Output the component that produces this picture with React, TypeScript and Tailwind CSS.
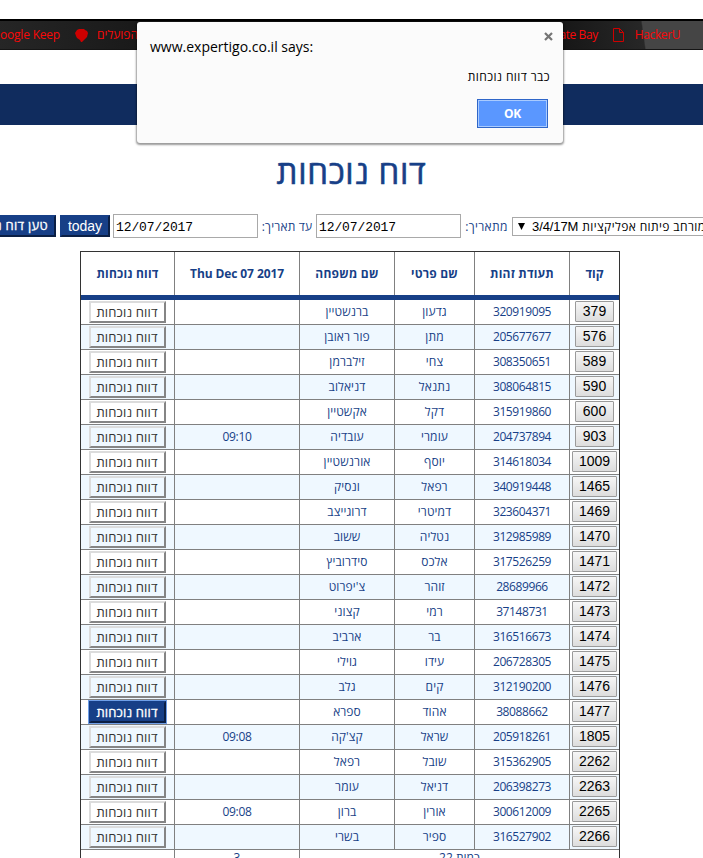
import React from "react";

type Row = [string, string, string, string, string];

const rows: Row[] = [
  ["379", "320919095", "גדעון", "ברנשטיין", ""],
  ["576", "205677677", "מתן", "פור ראובן", ""],
  ["589", "308350651", "צחי", "זילברמן", ""],
  ["590", "308064815", "נתנאל", "דניאלוב", ""],
  ["600", "315919860", "דקל", "אקשטיין", ""],
  ["903", "204737894", "עומרי", "עובדיה", "09:10"],
  ["1009", "314618034", "יוסף", "אורנשטיין", ""],
  ["1465", "340919448", "רפאל", "ונסיק", ""],
  ["1469", "323604371", "דמיטרי", "דרוגייצב", ""],
  ["1470", "312985989", "נטליה", "ששוב", ""],
  ["1471", "317526259", "אלכס", "סידרוביץ", ""],
  ["1472", "28689966", "זוהר", "צ'יפרוט", ""],
  ["1473", "37148731", "רמי", "קצוני", ""],
  ["1474", "316516673", "בר", "ארביב", ""],
  ["1475", "206728305", "עידו", "גוילי", ""],
  ["1476", "312190200", "קים", "גלב", ""],
  ["1477", "38088662", "אהוד", "ספרא", ""],
  ["1805", "205918261", "שראל", "קצ'קה", "09:08"],
  ["2262", "315362905", "שובל", "רפאל", ""],
  ["2263", "206398273", "דניאל", "עומר", ""],
  ["2265", "300612009", "אורין", "ברון", "09:08"],
  ["2266", "316527902", "ספיר", "בשרי", ""],
];

const gridCols = "grid grid-cols-[94px_125px_95px_80px_95px_49px]";
const cell = "flex items-center justify-center border-r border-[#808080] whitespace-nowrap";

function ReportButton({ active }: { active: boolean }) {
  return (
    <button
      dir="rtl"
      className={
        "-ml-px flex h-[22px] w-[77px] items-center justify-center border-2 text-[13px] leading-none tracking-[0.15px] whitespace-nowrap " +
        (active
          ? "border-[#173f87] border-r-[#0b1f44] border-b-[#0b1f44] bg-[#173f87] text-white outline outline-1 outline-[#6f9fe8] [-webkit-text-stroke:0.3px]"
          : "border-t-[#dcdcdc] border-l-[#dcdcdc] border-r-[#858585] border-b-[#858585] text-[#333]")
      }
    >
      דווח נוכחות
    </button>
  );
}

function CodeButton({ code }: { code: string }) {
  return (
    <button
      className={
        "mb-[2px] flex h-[21px] items-center justify-center rounded-[1px] border border-[#9a9a9a] bg-linear-to-b from-[#f6f6f6] to-[#dddddd] font-['Liberation_Sans',sans-serif] text-[14px] leading-none text-black " +
        (code.length > 3 ? "w-[45px]" : "w-[39px]")
      }
    >
      {code}
    </button>
  );
}

function DateInput() {
  return (
    <div className="h-6 w-[145px] shrink-0 border border-[#a9a9a9] bg-white px-[2px] font-['Liberation_Mono',monospace] text-[13px] leading-[25px] tracking-[-0.1px] text-black">
      12/07/2017
    </div>
  );
}

function Dialog() {
  return (
    <div className="absolute top-[22px] left-[137px] h-[121px] w-[426px] rounded-[3px] bg-[#fbfbfb] shadow-[0_1px_2px_1px_rgba(0,0,0,0.4)]">
      <div className="flex items-start justify-between pt-[15px] pr-[10px] pl-[13px]">
        <span className="text-[14px] leading-5 text-black">www.expertigo.co.il says:</span>
        <svg width="9" height="9" viewBox="0 0 9 9" className="-mt-[5px]">
          <path d="M1 1l7 7M8 1L1 8" stroke="#757575" strokeWidth="2.2" />
        </svg>
      </div>
      <p dir="rtl" className="mt-[11px] pr-[13px] text-[12px] leading-[18px] tracking-[0.4px] text-black">
        כבר דווח נוכחות
      </p>
      <div className="mt-[13px] flex justify-end pr-[15px]">
        <button className="h-[29px] w-[71px] border border-[#2f66c8] bg-[#5a97ff] text-[12px] leading-[26px] font-bold tracking-[-0.3px] text-white inset-ring inset-ring-[#a9cbff]">
          OK
        </button>
      </div>
    </div>
  );
}

export default function App() {
  return (
    <div className="relative h-[858px] w-[703px] overflow-hidden bg-white font-['Open_Sans','Noto_Sans',sans-serif] text-[#173f87]">
      <div className="pt-[19px]">
        <div className="flex h-[31px] items-center justify-between border-t-2 border-b border-t-black border-b-[#151515] bg-[linear-gradient(82deg,#262626_0%,#181818_22%,#080808_55%,#171717_80%,#272727_91.2%,#454545_91.4%,#454545_100%)] text-[12px] leading-4 text-[#fa0808]">
          <div className="flex items-center">
            <span className="w-[61px] tracking-[-0.2px] whitespace-nowrap">oogle Keep</span>
            <svg width="13" height="14" viewBox="0 0 13 14" className="mr-[9px] ml-[14px]">
              <path d="M4 1h5l1 1 2 1 1 2-1 4-3 3-2 2H6l-1-2-3-2-1-2-1-3 2-3z" fill="#ce0000" />
            </svg>
            <span dir="rtl" className="whitespace-nowrap">הפועלים</span>
          </div>
          <div className="flex items-center pr-[23px] tracking-[-0.4px]">
            <span>ate Bay</span>
            <svg width="11" height="14" viewBox="0 0 11 14" className="mr-[11px] ml-[15px]" fill="none" stroke="#cf0000">
              <path d="M.5.5h6l4 4v9H.5zM6.5.5v4h4" />
            </svg>
            <span>HackerU</span>
          </div>
        </div>
      </div>
      <div className="mt-[34px] h-[41px] bg-[#102c5e]" />
      <h1 dir="rtl" className="mt-[24px] h-[46px] text-center text-[33px] leading-[46px] font-normal tracking-[0.7px] [-webkit-text-stroke:0.6px]">
        דוח נוכחות
      </h1>
      <div className="mt-[19px] flex h-6 w-[720px] items-start text-[12px]">
        <div dir="rtl" className="mt-px flex h-[22px] w-[56px] shrink-0 items-center overflow-hidden border-2 border-l-0 border-[#173f87] border-r-[#0b1f44] border-b-[#0b1f44] bg-[#173f87] pr-[6px] text-[13px] tracking-[0.3px] whitespace-nowrap text-white [-webkit-text-stroke:0.3px]">
          טען דוח נוכחות
        </div>
        <button className="mt-px ml-1 h-[22px] w-[50px] shrink-0 border-2 border-[#173f87] border-r-[#0b1f44] border-b-[#0b1f44] bg-[#173f87] font-['Liberation_Sans',sans-serif] text-[14px] leading-[18px] text-white">
          today
        </button>
        <div className="w-[3px] shrink-0" />
        <DateInput />
        <span dir="rtl" className="w-[58px] shrink-0 text-center leading-[26px] tracking-[0.2px] whitespace-nowrap">עד תאריך:</span>
        <DateInput />
        <span dir="rtl" className="w-[51px] shrink-0 text-center leading-[26px] tracking-[0.35px] whitespace-nowrap">מתאריך:</span>
        <div className="mt-[3px] flex h-[19px] w-[208px] shrink-0 items-center border border-[#a9a9a9] pl-[5px] text-black">
          <svg width="7" height="7" viewBox="0 0 7 7">
            <path d="M0 0h7L3.500 7z" />
          </svg>
          <span className="ml-[7px] font-['Liberation_Sans',sans-serif] text-[13px] tracking-[-0.1px] whitespace-nowrap">3/4/17M</span>
          <span dir="rtl" className="ml-1 text-[12px] tracking-[0.4px] whitespace-nowrap">מורחב פיתוח אפליקציות</span>
        </div>
      </div>
      <div className="mt-[13px] ml-[80px] w-[540px] border border-[#333] text-[12px]">
        <div className={gridCols + " h-[48px] border-b-[5px] border-[#173f87] font-bold"}>
          <div dir="rtl" className={cell + " tracking-[0.2px]"}>דווח נוכחות</div>
          <div className={cell + " tracking-[-0.1px]"}>Thu Dec 07 2017</div>
          <div dir="rtl" className={cell + " tracking-[0.25px]"}>שם משפחה</div>
          <div dir="rtl" className={cell + " tracking-[0.2px]"}>שם פרטי</div>
          <div dir="rtl" className={cell + " tracking-[0.2px]"}>תעודת זהות</div>
          <div dir="rtl" className="flex items-center justify-center">קוד</div>
        </div>
        {rows.map(([code, id, first, last, time], i) => (
          <div
            key={code}
            className={gridCols + " h-[25px] border-b border-[#808080] " + (i % 2 ? "bg-[#eff8ff]" : "bg-white")}
          >
            <div className={cell}>
              <ReportButton active={code === "1477"} />
            </div>
            <div className={cell + " tracking-[-0.3px]"}>{time}</div>
            <div dir="rtl" className={cell + " tracking-[0.1px]"}>{last}</div>
            <div dir="rtl" className={cell + " tracking-[0.1px]"}>{first}</div>
            <div className={cell + " tracking-[-0.4px]"}>{id}</div>
            <div className="flex items-center justify-center">
              <CodeButton code={code} />
            </div>
          </div>
        ))}
        <div className="grid h-[25px] grid-cols-[94px_125px_319px] leading-[16px]">
          <div className="border-r border-[#808080]" />
          <div className="border-r border-[#808080] text-center">3</div>
          <div dir="rtl" className="text-center">כמות 22</div>
        </div>
      </div>
      <Dialog />
    </div>
  );
}
